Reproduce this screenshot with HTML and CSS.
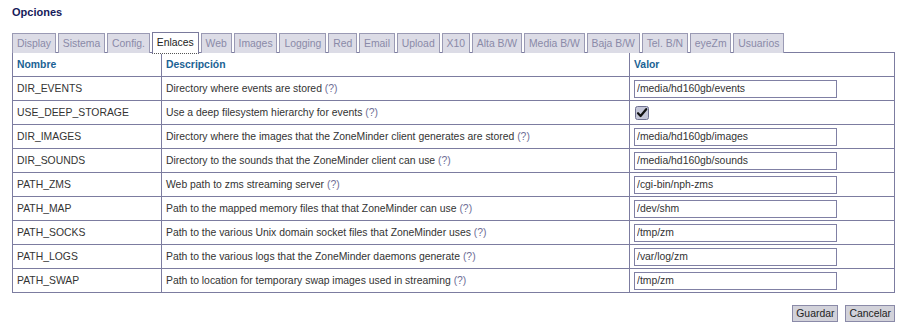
FILE: index.html
```html
<!DOCTYPE html>
<html lang="es">
<head>
    <meta charset="UTF-8">
    <title>ZM - Opciones</title>
    <link rel="stylesheet" href="styles.css">
</head>
<body>
    <div class="page">
        <h2 class="title">Opciones</h2>

        <ul class="tabs">
            <li>Display</li>
            <li>Sistema</li>
            <li>Config.</li>
            <li class="active">Enlaces</li>
            <li>Web</li>
            <li>Images</li>
            <li>Logging</li>
            <li>Red</li>
            <li>Email</li>
            <li>Upload</li>
            <li>X10</li>
            <li>Alta B/W</li>
            <li>Media B/W</li>
            <li>Baja B/W</li>
            <li>Tel. B/N</li>
            <li>eyeZm</li>
            <li>Usuarios</li>
        </ul>

        <table class="options">
            <thead>
                <tr>
                    <th class="col-name">Nombre</th>
                    <th class="col-desc">Descripción</th>
                    <th>Valor</th>
                </tr>
            </thead>
            <tbody>
                <tr>
                    <td>DIR_EVENTS</td>
                    <td>Directory where events are stored <span class="help">(?)</span></td>
                    <td><input type="text" value="/media/hd160gb/events"></td>
                </tr>
                <tr>
                    <td>USE_DEEP_STORAGE</td>
                    <td>Use a deep filesystem hierarchy for events <span class="help">(?)</span></td>
                    <td>
                        <span class="check">
                            <svg width="14" height="14" viewBox="0 0 14 14">
                                <rect x="0.5" y="0.5" width="13" height="13" rx="2" fill="#c4c6d8" stroke="#6e7090"/>
                                <path d="M3 7.2 L5.6 10 L11.2 3.2" fill="none" stroke="#111" stroke-width="2.2" stroke-linecap="round" stroke-linejoin="round"/>
                            </svg>
                        </span>
                    </td>
                </tr>
                <tr>
                    <td>DIR_IMAGES</td>
                    <td>Directory where the images that the ZoneMinder client generates are stored <span class="help">(?)</span></td>
                    <td><input type="text" value="/media/hd160gb/images"></td>
                </tr>
                <tr>
                    <td>DIR_SOUNDS</td>
                    <td>Directory to the sounds that the ZoneMinder client can use <span class="help">(?)</span></td>
                    <td><input type="text" value="/media/hd160gb/sounds"></td>
                </tr>
                <tr>
                    <td>PATH_ZMS</td>
                    <td>Web path to zms streaming server <span class="help">(?)</span></td>
                    <td><input type="text" value="/cgi-bin/nph-zms"></td>
                </tr>
                <tr>
                    <td>PATH_MAP</td>
                    <td>Path to the mapped memory files that that ZoneMinder can use <span class="help">(?)</span></td>
                    <td><input type="text" value="/dev/shm"></td>
                </tr>
                <tr>
                    <td>PATH_SOCKS</td>
                    <td>Path to the various Unix domain socket files that ZoneMinder uses <span class="help">(?)</span></td>
                    <td><input type="text" value="/tmp/zm"></td>
                </tr>
                <tr>
                    <td>PATH_LOGS</td>
                    <td>Path to the various logs that the ZoneMinder daemons generate <span class="help">(?)</span></td>
                    <td><input type="text" value="/var/log/zm"></td>
                </tr>
                <tr>
                    <td>PATH_SWAP</td>
                    <td>Path to location for temporary swap images used in streaming <span class="help">(?)</span></td>
                    <td><input type="text" value="/tmp/zm"></td>
                </tr>
            </tbody>
        </table>

        <div class="actions">
            <button>Guardar</button>
            <button>Cancelar</button>
        </div>
    </div>
</body>
</html>
```

FILE: styles.css
```css
body {
    margin: 0;
    background: #ffffff;
    font-family: "Liberation Sans", Arial, sans-serif;
    font-size: 10.4px;
    color: #333333;
}

.page {
    padding: 6px 10px 0 12px;
}

.title {
    margin: 0 0 13px;
    font-size: 11px;
    font-weight: bold;
    color: #161a5a;
    line-height: 13px;
}

.tabs {
    list-style: none;
    margin: 0;
    padding: 0;
    display: flex;
    gap: 2px;
    height: 20px;
}

.tabs li {
    border: 1px solid #9a9ab4;
    border-bottom: none;
    background: #dcdce6;
    color: #8a8aa8;
    padding: 0 3.9px;
    line-height: 19px;
    height: 19px;
    margin-top: 1px;
}

.tabs li.active {
    background: #ffffff;
    color: #222222;
    border-color: #7a7a9c;
    border-bottom: 1px dotted #555;
    height: 19px;
    margin-top: 0;
    padding-top: 1px;
    line-height: 18px;
}

.options {
    width: 883px;
    border-collapse: collapse;
    border: 1px solid #6c6c92;
}

.options th,
.options td {
    border: 1px solid #7c7ca0;
    height: 23px;
    padding: 0 4px;
    text-align: left;
    vertical-align: middle;
}

.options th {
    color: #1b6294;
    font-weight: bold;
    height: 23px;
}

.col-name {
    width: 140px;
}

.col-desc {
    width: 459px;
}

.help {
    color: #6e6e96;
}

.options input[type="text"] {
    width: 203px;
    height: 18px;
    box-sizing: border-box;
    border: 1px solid #8080a4;
    padding: 0 2px;
    font-family: "Liberation Sans", Arial, sans-serif;
    font-size: 10.4px;
    color: #333333;
    display: block;
}

.check {
    display: block;
    height: 14px;
    padding-left: 1px;
}

.check svg {
    display: block;
}

.actions {
    display: flex;
    justify-content: flex-end;
    gap: 7px;
    margin-top: 12px;
}

button {
    font-family: "Liberation Sans", Arial, sans-serif;
    font-size: 10.4px;
    color: #222222;
    background: #d2d2da;
    border: 1px solid #8a8aa8;
    padding: 0 3px;
    height: 17px;
    line-height: 15px;
    cursor: pointer;
}
```
